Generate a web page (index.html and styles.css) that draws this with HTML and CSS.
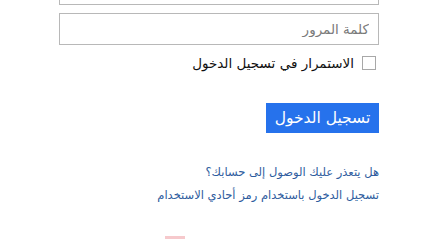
FILE: index.html
```html
<!DOCTYPE html>
<html lang="ar" dir="rtl">
<head>
  <meta charset="UTF-8" />
  <title>تسجيل الدخول</title>
  <link rel="stylesheet" href="styles.css">
</head>
<body>
  <div class="container">
    <input type="text" class="field" placeholder="البريد الإلكتروني" />
    <input type="password" class="field" placeholder="كلمة المرور" />

    <label class="remember">
      <span class="box"></span>
      <span>الاستمرار في تسجيل الدخول</span>
    </label>

    <div class="actions">
      <button class="btn">تسجيل الدخول</button>
    </div>

    <div class="links">
      <a href="#">هل يتعذر عليك الوصول إلى حسابك؟</a>
      <a href="#">تسجيل الدخول باستخدام رمز أحادي الاستخدام</a>
    </div>

    <div class="footer">
      <span class="mark"></span>
    </div>
  </div>
</body>
</html>
```

FILE: styles.css
```css
body {
  margin: 0;
  font-family: "DejaVu Sans", sans-serif;
  background: #ffffff;
  overflow: hidden;
}
.container {
  width: 320px;
  margin: -27px auto 0 59px;
  display: flex;
  flex-direction: column;
}
.field {
  height: 32px;
  margin: 0 0 8px 0;
  padding: 0 9px;
  border: 1px solid #b8b8b8;
  font-family: inherit;
  font-size: 13.5px;
  text-align: right;
  direction: rtl;
  box-sizing: border-box;
}
.field::placeholder {
  color: #7a7a7a;
}
.remember {
  display: flex;
  align-items: center;
  gap: 8px;
  margin-top: 0;
  padding-right: 3px;
  font-size: 13.5px;
  color: #111;
  height: 20px;
}
.box {
  width: 12px;
  height: 12px;
  border: 1px solid #a8a8a8;
  background: #fff;
}
.actions {
  display: flex;
  margin-top: 30px;
}
.btn {
  width: 113px;
  height: 30px;
  background-color: #2672ec;
  color: white;
  font-family: inherit;
  font-size: 15.5px;
  border: none;
  padding: 0;
}
.links {
  display: flex;
  flex-direction: column;
  margin-top: 28px;
  line-height: 23px;
}
.links a {
  color: #2e5c9e;
  font-size: 11.5px;
  text-decoration: none;
}
.footer {
  display: flex;
  justify-content: flex-end;
  margin-top: 29px;
  padding-left: 106px;
}
.mark {
  width: 20px;
  height: 6px;
  background: #f6c9cc;
}
```
